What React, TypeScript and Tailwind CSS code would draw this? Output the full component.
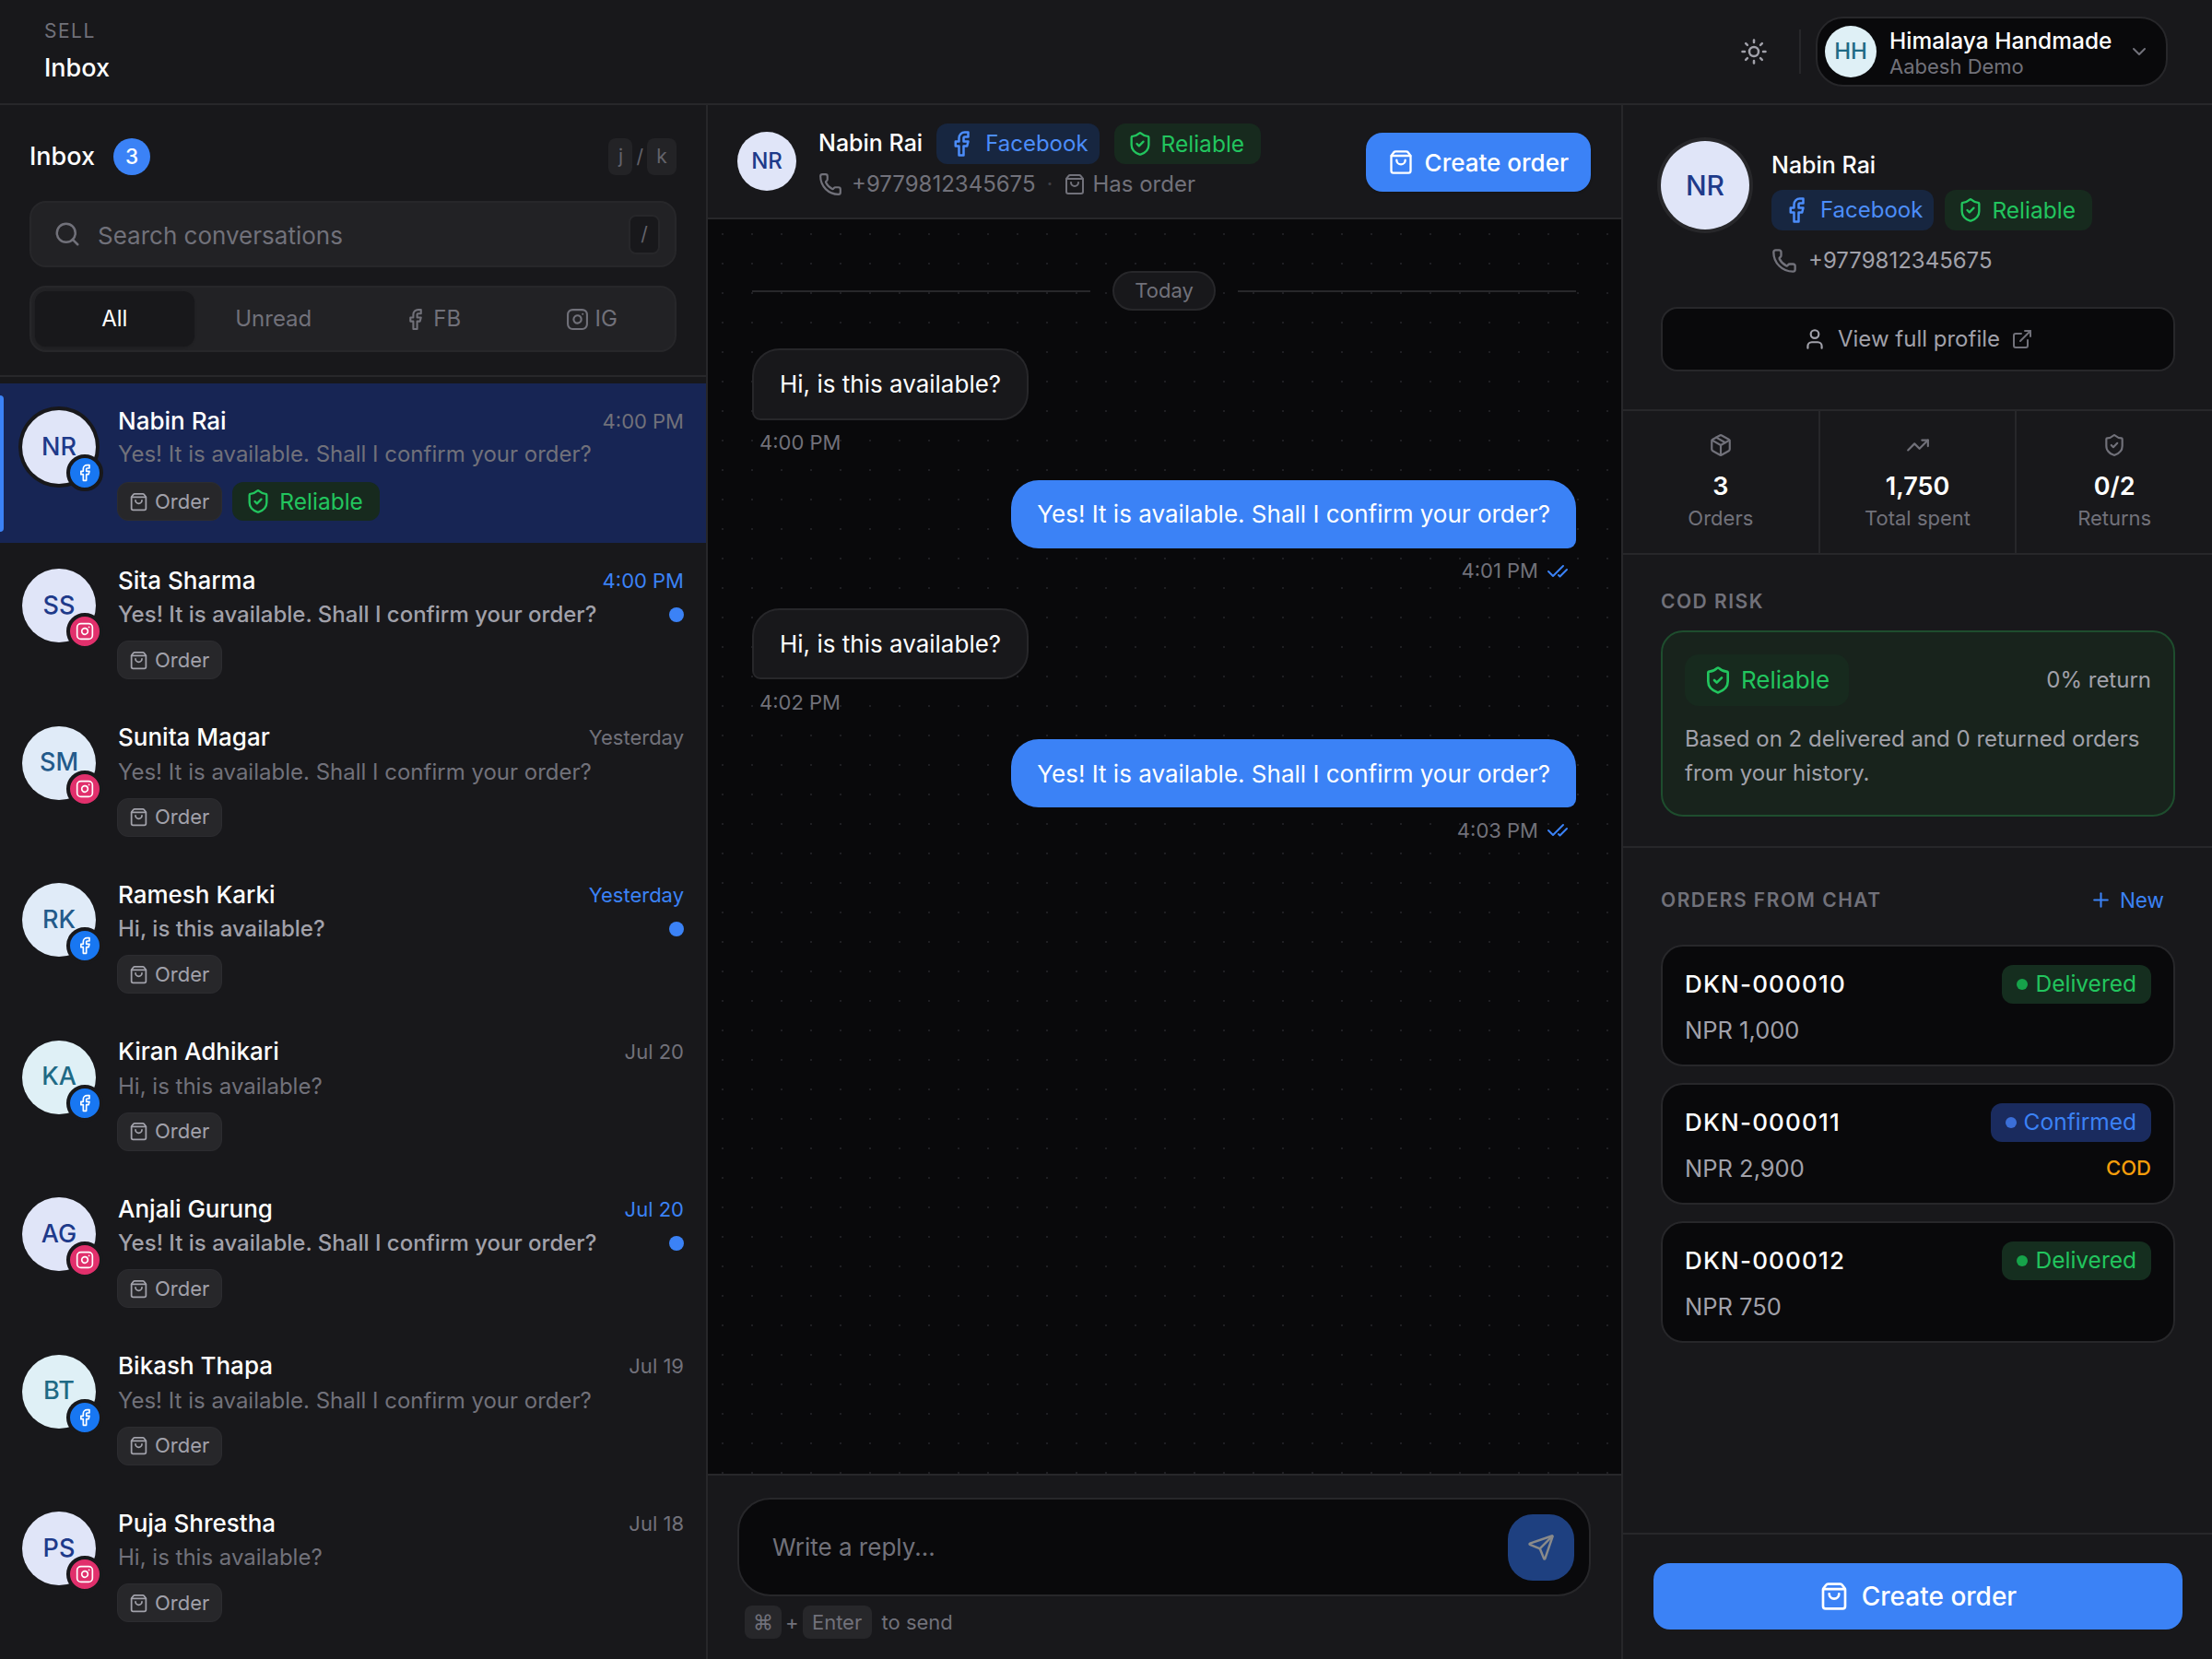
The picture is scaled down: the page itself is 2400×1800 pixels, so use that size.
import { Search, Instagram, Facebook, ShoppingBag, ShieldCheck, Phone, CheckCheck, Sun, ChevronDown, User, ExternalLink, Package, TrendingUp, Plus, Send } from 'lucide-react';

const conversations = [
  { initials: 'NR', name: 'Nabin Rai', preview: 'Yes! It is available. Shall I confirm your order?', time: '4:00 PM', channel: 'fb', tone: 'indigo', selected: true },
  { initials: 'SS', name: 'Sita Sharma', preview: 'Yes! It is available. Shall I confirm your order?', time: '4:00 PM', channel: 'ig', tone: 'indigo', unread: true },
  { initials: 'SM', name: 'Sunita Magar', preview: 'Yes! It is available. Shall I confirm your order?', time: 'Yesterday', channel: 'ig', tone: 'blue' },
  { initials: 'RK', name: 'Ramesh Karki', preview: 'Hi, is this available?', time: 'Yesterday', channel: 'fb', tone: 'blue', unread: true },
  { initials: 'KA', name: 'Kiran Adhikari', preview: 'Hi, is this available?', time: 'Jul 20', channel: 'fb', tone: 'cyan' },
  { initials: 'AG', name: 'Anjali Gurung', preview: 'Yes! It is available. Shall I confirm your order?', time: 'Jul 20', channel: 'ig', tone: 'indigo', unread: true },
  { initials: 'BT', name: 'Bikash Thapa', preview: 'Yes! It is available. Shall I confirm your order?', time: 'Jul 19', channel: 'fb', tone: 'cyan' },
  { initials: 'PS', name: 'Puja Shrestha', preview: 'Hi, is this available?', time: 'Jul 18', channel: 'ig', tone: 'indigo' },
];

const orders = [
  { id: 'DKN-000010', amount: 'NPR 1,000', status: 'Delivered' },
  { id: 'DKN-000011', amount: 'NPR 2,900', status: 'Confirmed', cod: true },
  { id: 'DKN-000012', amount: 'NPR 750', status: 'Delivered' },
];

const toneClass: Record<string, string> = {
  indigo: 'bg-[#e0e5f8] text-[#1e3a8a]',
  blue: 'bg-[#e0ebf8] text-[#235a8a]',
  cyan: 'bg-[#dff0f6] text-[#1f6a85]',
};

function ReliableBadge({ big, row }: { big?: boolean; row?: boolean }) {
  return (
    <span className={`inline-flex items-center bg-[#172a1e] text-[#22c55e] ${big ? 'h-[56px] gap-[9px] rounded-[15px] pl-[20px] pr-[21px] text-[26px]' : `${row ? 'h-[42px]' : 'h-[44px]'} gap-[9px] rounded-[12px] pl-[14px] pr-[18px] text-[24.5px]`}`}>
      <ShieldCheck className={big ? 'h-[32px] w-[32px]' : 'h-[28px] w-[28px]'} strokeWidth={2} />
      Reliable
    </span>
  );
}

function FacebookBadge() {
  return (
    <span className="inline-flex h-[44px] items-center gap-[11px] rounded-[12px] bg-[#172640] px-[12px] text-[24px] text-[#4c8dfa]">
      <Facebook className="h-[30px] w-[30px]" strokeWidth={2} />
      Facebook
    </span>
  );
}

function ConversationRow({ c }: { c: (typeof conversations)[number] }) {
  return (
    <div className={`relative flex gap-[23px] pl-[24px] pr-[24px] pt-[26px] ${c.selected ? 'h-[173px] bg-[#172554]' : 'h-[170.5px]'}`}>
      {c.selected && <div className="absolute left-0 top-[13px] h-[148px] w-[4px] rounded-r-full bg-[#3b82f6]" />}
      <div className={`relative flex h-[80px] w-[80px] shrink-0 items-center justify-center rounded-full text-[27px] font-medium ${toneClass[c.tone]} ${c.selected ? 'mt-[3px] ring-4 ring-[#18181b]' : 'mt-[2px]'}`}>
        {c.initials}
        <span className={`absolute -bottom-[8px] -right-[8px] flex h-[40px] w-[40px] items-center justify-center rounded-full border-4 border-[#18181b] text-white ${c.channel === 'fb' ? 'bg-[#1877f2]' : 'bg-[#e1306c]'}`}>
          {c.channel === 'fb' ? <Facebook className="h-[20px] w-[20px]" strokeWidth={2} /> : <Instagram className="h-[20px] w-[20px]" strokeWidth={2} />}
        </span>
      </div>
      <div className="min-w-0 flex-1">
        <div className="flex h-[28px] items-center justify-between pl-[1px]">
          <span className="text-[26px] font-medium text-white">{c.name}</span>
          <span className={`pt-[2px] text-[22px] ${c.unread ? 'text-[#3b82f6]' : 'text-[#71717a]'}`}>{c.time}</span>
        </div>
        <div className={`flex h-[36px] items-center justify-between pl-[1px] ${c.selected ? 'mt-[5px]' : 'mt-[6px]'}`}>
          <span className={`text-[24px] ${c.unread ? 'font-medium text-[#a1a1aa]' : 'text-[#71717a]'}`}>{c.preview}</span>
          {c.unread && <span className="h-[16px] w-[16px] rounded-full bg-[#3b82f6]" />}
        </div>
        <div className={`flex items-center gap-[11px] ${c.selected ? 'mt-[12px]' : 'mt-[10px]'}`}>
          <span className="inline-flex h-[42px] items-center gap-[7px] rounded-[12px] border border-[#2c2c30] bg-[#27272a] pl-[12px] pr-[13px] text-[22px] text-[#a1a1aa]">
            <ShoppingBag className="h-[21px] w-[21px]" strokeWidth={2} />
            Order
          </span>
          {c.selected && <ReliableBadge row />}
        </div>
      </div>
    </div>
  );
}

function Bubble({ text, time, mine }: { text: string; time: string; mine?: boolean }) {
  if (mine) {
    return (
      <div className="flex flex-col items-end">
        <div className="flex h-[74px] items-center rounded-[30px] rounded-br-[9px] bg-[#3b82f6] px-[28px] text-[26px] text-white">{text}</div>
        <div className="mt-[9px] flex h-[32px] items-center gap-[9px] pr-[8px] text-[22px] text-[#71717a]">
          {time}
          <CheckCheck className="h-[24px] w-[24px] text-[#3b82f6]" strokeWidth={2} />
        </div>
      </div>
    );
  }
  return (
    <div className="flex flex-col items-start">
      <div className="flex h-[77.5px] items-center rounded-[30px] rounded-bl-[9px] border-2 border-[#27272a] bg-[#18181b] px-[28px] text-[26px] text-white">{text}</div>
      <div className="mt-[9px] flex h-[32px] items-center pl-[8px] text-[22px] text-[#71717a]">{time}</div>
    </div>
  );
}

export default function App() {
  return (
    <div className="flex h-[1800px] w-[2400px] flex-col overflow-hidden bg-[#18181b] font-['Inter',sans-serif] text-white">
      <header className="flex h-[114px] shrink-0 items-center justify-between border-b-2 border-[#27272a] pl-[48px] pr-[48px]">
        <div>
          <div className="text-[21px] tracking-[1.5px] text-[#71717a]">SELL</div>
          <div className="mt-[4px] text-[27px] font-medium">Inbox</div>
        </div>
        <div className="flex items-center">
          <Sun className="mr-[34px] h-[30px] w-[30px] text-[#a1a1aa]" strokeWidth={2} />
          <div className="mr-[16px] h-[48px] w-[2px] bg-[#27272a]" />
          <div className="flex h-[76px] w-[382px] items-center rounded-[30px] border-2 border-[#27272a] bg-[#09090b] pl-[8px]">
            <div className="flex h-[56px] w-[56px] items-center justify-center rounded-full bg-[#dff0f6] text-[24px] font-medium text-[#1f6a85]">HH</div>
            <div className="ml-[14px]">
              <div className="pt-[1px] text-[24.5px] font-medium leading-[30px]">Himalaya Handmade</div>
              <div className="text-[22px] leading-[26px] text-[#71717a]">Aabesh Demo</div>
            </div>
            <ChevronDown className="ml-[18px] h-[24px] w-[24px] text-[#71717a]" strokeWidth={2} />
          </div>
        </div>
      </header>
      <div className="flex min-h-0 flex-1">
        <aside className="w-[768px] shrink-0 overflow-hidden border-r-2 border-[#27272a]">
          <div className="h-[295px] border-b-2 border-[#27272a] px-[32px] pt-[36px]">
            <div className="flex h-[40px] items-center justify-between">
              <div className="flex items-center gap-[20px]">
                <span className="text-[27px] font-medium">Inbox</span>
                <span className="flex h-[40px] w-[40px] items-center justify-center rounded-full bg-[#3b82f6] text-[22.5px] font-medium">3</span>
              </div>
              <div className="flex items-center gap-[4px] text-[21px] text-[#63636b]">
                <span className="flex h-[40px] w-[26px] items-center justify-center rounded-[8px] bg-[#232326]">j</span>
                /
                <span className="flex h-[40px] w-[32px] items-center justify-center rounded-[8px] bg-[#232326]">k</span>
              </div>
            </div>
            <div className="mt-[28px] flex h-[72px] items-center rounded-[18px] border-2 border-[#27272a] bg-[#222225] pl-[24px] pr-[16px]">
              <Search className="h-[30px] w-[30px] text-[#71717a]" strokeWidth={2} />
              <span className="ml-[18px] flex-1 pt-[2px] text-[26px] text-[#71717a]">Search conversations</span>
              <span className="flex h-[43px] w-[34px] items-center justify-center rounded-[8px] border-2 border-[#27272a] bg-[#18181b] text-[21px] text-[#63636b]">/</span>
            </div>
            <div className="mt-[20px] flex h-[72px] items-center rounded-[18px] border-2 border-[#27272a] bg-[#222225] px-[4px] text-[24px] text-[#71717a]">
              <span className="flex h-[60px] flex-1 items-center justify-center rounded-[12px] bg-[#18181b] text-white shadow-sm">All</span>
              <span className="flex h-[60px] flex-1 items-center justify-center">Unread</span>
              <span className="flex h-[60px] flex-1 items-center justify-center gap-[7px]"><Facebook className="h-[25px] w-[25px]" strokeWidth={2} />FB</span>
              <span className="flex h-[60px] flex-1 items-center justify-center gap-[7px]"><Instagram className="h-[25px] w-[25px]" strokeWidth={2} />IG</span>
            </div>
          </div>
          <div className="pt-[7px]">
            {conversations.map(c => <ConversationRow key={c.initials} c={c} />)}
          </div>
        </aside>

        <main className="flex w-[993px] shrink-0 flex-col border-r-2 border-[#27272a]">
          <div className="flex h-[124px] shrink-0 items-center justify-between border-b-2 border-[#27272a] pl-[32px] pr-[33px]">
            <div className="flex items-center gap-[24px]">
              <div className="flex h-[64px] w-[64px] items-center justify-center rounded-full bg-[#e0e5f8] text-[24px] font-medium text-[#1e3a8a]">NR</div>
              <div className="mt-[2px]">
                <div className="flex items-center">
                  <span className="mr-[15px] text-[25px] font-medium">Nabin Rai</span>
                  <FacebookBadge />
                  <span className="ml-[16px]"><ReliableBadge /></span>
                </div>
                <div className="mt-[4px] flex items-center gap-[10px] text-[24px] text-[#71717a]">
                  <Phone className="h-[26px] w-[26px]" strokeWidth={2} />
                  <span>+9779812345675</span>
                  <span className="mx-[2px] text-[#3f3f46]">·</span>
                  <ShoppingBag className="h-[24px] w-[24px]" strokeWidth={2} />
                  <span className="-ml-[3px]">Has order</span>
                </div>
              </div>
            </div>
            <div className="mt-[2px] flex h-[64px] items-center gap-[12px] rounded-[18px] bg-[#3b82f6] px-[24px] text-[26px] font-medium shadow-sm">
              <ShoppingBag className="h-[28px] w-[28px]" strokeWidth={2} />
              Create order
            </div>
          </div>
          <div className="min-h-0 flex-1 bg-[#09090b] bg-[radial-gradient(#1f1f23_1px,transparent_1px)] bg-[size:32px_32px] pl-[48px] pr-[49px] pt-[56px]">
            <div className="flex items-center gap-[24px]">
              <div className="h-[2px] flex-1 bg-[#27272a]" />
              <span className="flex h-[43px] items-center rounded-full border-2 border-[#27272a] bg-[#18181b] px-[22px] text-[22px] text-[#71717a]">Today</span>
              <div className="h-[2px] flex-1 bg-[#27272a]" />
            </div>
            <div className="mt-[41px] flex flex-col gap-[24px]">
              <Bubble text="Hi, is this available?" time="4:00 PM" />
              <Bubble text="Yes! It is available. Shall I confirm your order?" time="4:01 PM" mine />
              <Bubble text="Hi, is this available?" time="4:02 PM" />
              <Bubble text="Yes! It is available. Shall I confirm your order?" time="4:03 PM" mine />
            </div>
          </div>
          <div className="h-[201px] shrink-0 border-t-2 border-[#27272a] pl-[32px] pr-[33px] pt-[24px]">
            <div className="flex h-[107px] items-center justify-between rounded-[36px] border-2 border-[#27272a] bg-[#09090b] pl-[36px] pr-[16px]">
              <span className="text-[26px] text-[#71717a]">Write a reply...</span>
              <div className="flex h-[72px] w-[72px] items-center justify-center rounded-[27px] bg-[#1e4080] text-[#8a8a8a]">
                <Send className="h-[30px] w-[30px]" strokeWidth={2} />
              </div>
            </div>
            <div className="mt-[10px] flex items-center gap-[4px] pl-[8px] text-[22px] text-[#71717a]">
              <span className="flex h-[36px] w-[40px] items-center justify-center rounded-[8px] bg-[#27272a]">⌘</span>
              +
              <span className="flex h-[36px] w-[75px] items-center justify-center rounded-[8px] bg-[#27272a]">Enter</span>
              <span className="ml-[7px]">to send</span>
            </div>
          </div>
        </main>

        <aside className="flex min-w-0 flex-1 flex-col">
          <div className="h-[332px] border-b-2 border-[#27272a] pl-[41px] pr-[40px] pt-[39px]">
            <div className="flex gap-[24px]">
              <div className="flex h-[96px] w-[96px] shrink-0 items-center justify-center rounded-full bg-[#e0e5f8] text-[30px] font-medium text-[#1e3a8a] ring-4 ring-[#27272a]">NR</div>
              <div className="pt-[8px]">
                <div className="text-[25px] font-medium leading-[36px]">Nabin Rai</div>
                <div className="mt-[9px] flex gap-[12px]">
                  <FacebookBadge />
                  <ReliableBadge />
                </div>
                <div className="mt-[15px] flex items-center gap-[12px] text-[24px] leading-[36px] text-[#a1a1aa]">
                  <Phone className="h-[28px] w-[28px] text-[#71717a]" strokeWidth={2} />
                  +9779812345675
                </div>
              </div>
            </div>
            <div className="mt-[32px] flex h-[70px] items-center justify-center gap-[12px] rounded-[18px] border-2 border-[#27272a] bg-[#09090b] text-[24px] text-[#a1a1aa]">
              <User className="h-[26px] w-[26px]" strokeWidth={2} />
              View full profile
              <ExternalLink className="h-[24px] w-[24px] text-[#71717a]" strokeWidth={2} />
            </div>
          </div>
          <div className="flex h-[156px] border-b-2 border-[#27272a]">
            {[
              { icon: Package, value: '3', label: 'Orders' },
              { icon: TrendingUp, value: '1,750', label: 'Total spent' },
              { icon: ShieldCheck, value: '0/2', label: 'Returns' },
            ].map((s, i) => (
              <div key={s.label} className={`flex flex-1 flex-col items-center pt-[24px] ${i < 2 ? 'border-r-2 border-[#27272a]' : ''}`}>
                <s.icon className="h-[26px] w-[26px] text-[#71717a]" strokeWidth={2} />
                <div className="mt-[12px] text-[27px] font-semibold">{s.value}</div>
                <div className="-mt-[3px] text-[22px] text-[#71717a]">{s.label}</div>
              </div>
            ))}
          </div>
          <div className="h-[318px] border-b-2 border-[#27272a] pl-[41px] pr-[40px] pt-[35px]">
            <div className="text-[21px] font-semibold tracking-[1.5px] text-[#71717a]">COD RISK</div>
            <div className="mt-[15px] h-[202px] rounded-[24px] border-2 border-[#1e4d2e] bg-[#18231c] px-[24px] pt-[24px]">
              <div className="flex items-center justify-between">
                <ReliableBadge big />
                <span className="text-[24px] text-[#a1a1aa]">0% return</span>
              </div>
              <p className="mt-[17px] text-[24px] leading-[37.5px] text-[#a1a1aa]">Based on 2 delivered and 0 returned orders from your history.</p>
            </div>
          </div>
          <div className="flex-1 pl-[41px] pr-[40px] pt-[40px]">
            <div className="flex items-center justify-between pr-[12px]">
              <span className="text-[21px] font-semibold tracking-[1.5px] text-[#71717a]">ORDERS FROM CHAT</span>
              <span className="flex items-center gap-[8px] text-[22.5px] text-[#3b82f6]"><Plus className="h-[25px] w-[25px]" strokeWidth={2} />New</span>
            </div>
            <div className="mt-[31px] flex flex-col gap-[18px]">
              {orders.map(o => (
                <div key={o.id} className="h-[132px] rounded-[24px] border-2 border-[#27272a] bg-[#09090b] px-[24px] pt-[20px]">
                  <div className="flex items-center justify-between">
                    <span className="text-[26px] font-medium tracking-[1.2px]">{o.id}</span>
                    <span className={`flex h-[42px] items-center gap-[8px] rounded-[12px] px-[16px] text-[24.5px] ${o.status === 'Delivered' ? 'bg-[#152e1f] text-[#22c55e]' : 'bg-[#1a2b5e] text-[#3b82f6]'}`}>
                      <span className={`h-[12px] w-[12px] rounded-full ${o.status === 'Delivered' ? 'bg-[#16a34a]' : 'bg-[#3b6fd8]'}`} />
                      {o.status}
                    </span>
                  </div>
                  <div className="mt-[10px] flex items-center justify-between text-[25.5px] text-[#a1a1aa]">
                    <span>{o.amount}</span>
                    {o.cod && <span className="text-[22px] font-medium text-[#f59e0b]">COD</span>}
                  </div>
                </div>
              ))}
            </div>
          </div>
          <div className="h-[137px] shrink-0 border-t-2 border-[#27272a] pl-[33px] pr-[32px] pt-[31px]">
            <div className="flex h-[72px] items-center justify-center gap-[14px] rounded-[18px] bg-[#3b82f6] text-[28px] font-medium">
              <ShoppingBag className="h-[32px] w-[32px]" strokeWidth={2} />
              Create order
            </div>
          </div>
        </aside>
      </div>
    </div>
  );
}
